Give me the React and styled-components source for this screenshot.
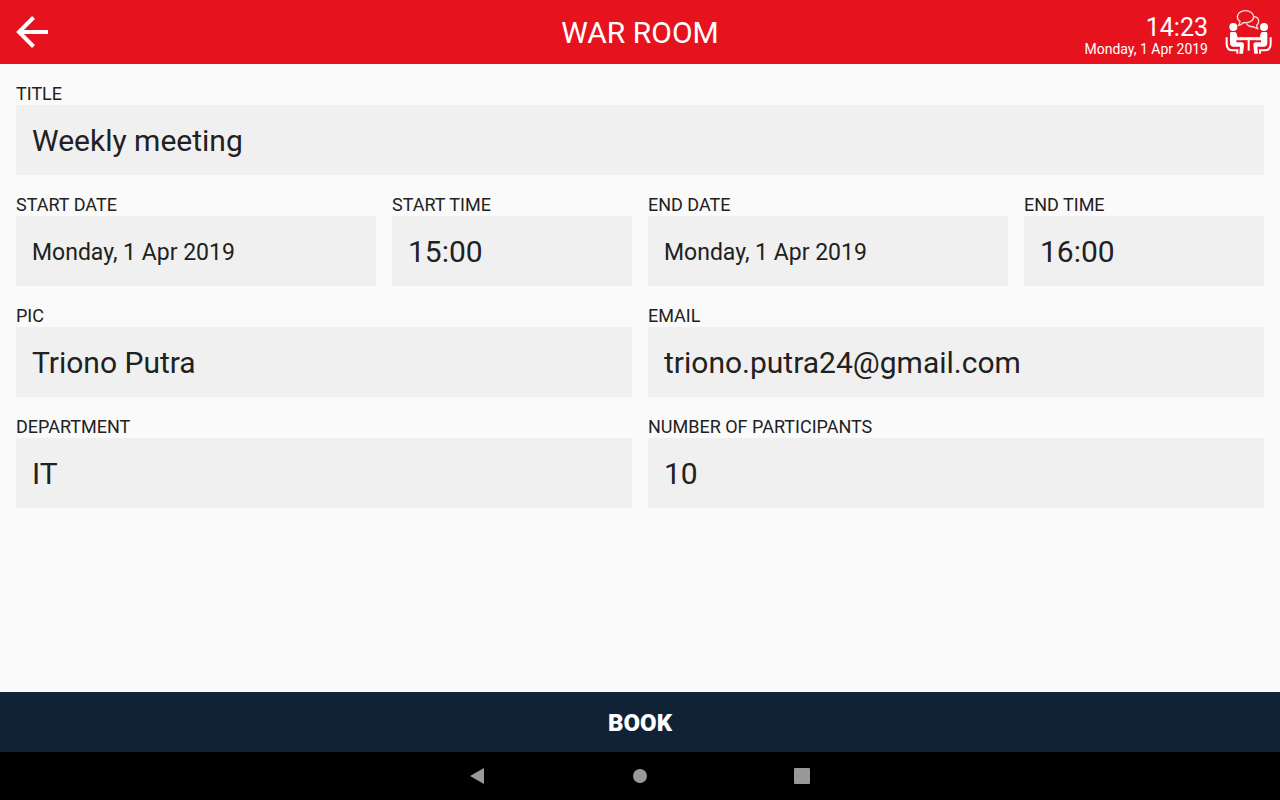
import React from 'react';
import styled, { createGlobalStyle } from 'styled-components';

const GlobalStyle = createGlobalStyle`
  * { box-sizing: border-box; }
  body {
    margin: 0;
    background: #fafafa;
    color: #212121;
    font-family: Roboto, "Liberation Sans", sans-serif;
  }
  button, input { font: inherit; color: inherit; border: 0; border-radius: 0; margin: 0; padding: 0; }
  button { background: none; cursor: pointer; }
`;

const Screen = styled.div`
  display: flex;
  flex-direction: column;
  min-height: 100vh;
`;

const Header = styled.header`
  display: grid;
  grid-template-columns: 1fr auto 1fr;
  align-items: center;
  height: 64px;
  background: #e6131e;
  color: #fff;
`;

const BackButton = styled.button`
  display: flex;
  width: 64px;
  height: 64px;
`;

const Title = styled.h1`
  margin: 0;
  font-size: 30px;
  line-height: 36px;
  padding-top: 2px;
  font-weight: 400;
`;

const Status = styled.div`
  display: flex;
  justify-content: flex-end;
  align-items: center;
  gap: 8px;
`;

const Clock = styled.div`
  display: flex;
  flex-direction: column;
  text-align: right;
  padding-top: 6px;
`;

const Time = styled.time`
  font-size: 25px;
  line-height: 28px;
`;

const Today = styled.time`
  font-size: 14px;
  line-height: 14px;
`;

const Form = styled.form`
  flex: 1;
  display: flex;
  flex-direction: column;
`;

const Fields = styled.div`
  flex: 1;
  display: grid;
  grid-template-columns: 3fr 2fr 3fr 2fr;
  align-content: start;
  gap: 20px 16px;
  padding: 20px 16px;
`;

const Field = styled.div`
  grid-column: span ${(p) => p.$span};
  display: flex;
  flex-direction: column;
  min-width: 0;
`;

const Label = styled.label`
  font-size: 18px;
  line-height: 19px;
  padding-bottom: 2px;
`;

const Input = styled.input`
  width: 100%;
  height: 70px;
  && { padding: ${(p) => (p.$compact ? 2 : 0)}px 16px 0; }
  background: #f0f0f0;
  font-size: ${(p) => (p.$compact ? 23 : 30)}px;
  outline: none;
`;

const BookButton = styled.button`
  height: 60px;
  && {
    padding-top: 2px;
    background: #102336;
    color: #fff;
    font-size: 24px;
    font-weight: 900;
  }
`;

const NavBar = styled.nav`
  display: flex;
  justify-content: center;
  gap: 114px;
  height: 48px;
  background: #000;
`;

const NavButton = styled.button`
  display: flex;
  width: 48px;
  height: 48px;
`;

const fields = [
  { id: 'title', label: 'TITLE', value: 'Weekly meeting', span: 4 },
  { id: 'start-date', label: 'START DATE', value: 'Monday, 1 Apr 2019', span: 1, compact: true },
  { id: 'start-time', label: 'START TIME', value: '15:00', span: 1 },
  { id: 'end-date', label: 'END DATE', value: 'Monday, 1 Apr 2019', span: 1, compact: true },
  { id: 'end-time', label: 'END TIME', value: '16:00', span: 1 },
  { id: 'pic', label: 'PIC', value: 'Triono Putra', span: 2 },
  { id: 'email', label: 'EMAIL', value: 'triono.putra24@gmail.com', span: 2 },
  { id: 'department', label: 'DEPARTMENT', value: 'IT', span: 2 },
  { id: 'participants', label: 'NUMBER OF PARTICIPANTS', value: '10', span: 2 },
];

const BackIcon = () => (
  <svg width="64" height="64" viewBox="0 0 64 64" fill="none" stroke="#fff" strokeWidth="4" aria-hidden="true">
    <path d="M48 32H19M33.5 17.5L19 32l14.5 14.5" />
  </svg>
);

const SeatedPerson = () => (
  <>
    <circle cx="52" cy="81" r="12" fill="#fff" stroke="none" />
    <path
      d="M47 96h8c4 0 6 2 7 6l3 10h10c5 0 5 9 0 9H61v6h15c6 0 8 3 8 8l-3 26h-11l2-21H53c-7 0-11-4-11-11v-27c0-4 1-6 5-6Z"
      fill="#fff"
      stroke="none"
    />
    <path d="M32 112v19q0 20 19 20h13v10" strokeWidth="6" />
  </>
);

const MeetingIcon = () => (
  <svg width="64" height="64" viewBox="0 0 192 192" fill="none" stroke="#fff" aria-hidden="true">
    <g strokeWidth="4" strokeOpacity="0.85">
      <path d="M88 32c-14 0-24 8-24 18 0 6 3 11 8 14 0 6-2 9-4 12 6-1 11-4 14-8 18 2 31-6 31-18 0-10-11-18-25-18Z" />
      <path d="M114 50c8 1 14 7 14 14 0 5-2 9-6 12 0 4 1 7 3 10-5-1-9-3-12-6-9 1-17-2-21-9" />
    </g>
    <SeatedPerson />
    <g transform="translate(196 0) scale(-1 1)"><SeatedPerson /></g>
    <path d="M72 116h52" strokeWidth="9" />
    <path d="M98 117v35" strokeWidth="6" />
  </svg>
);

const navItems = [
  { name: 'Back', shape: <path d="M16 24L30 16v16z" /> },
  { name: 'Home', shape: <circle cx="24" cy="24" r="7" /> },
  { name: 'Recent apps', shape: <rect x="16" y="16" width="16" height="16" rx="1" /> },
];

export default function App() {
  return (
    <Screen>
      <GlobalStyle />
      <Header>
        <BackButton type="button" aria-label="Go back"><BackIcon /></BackButton>
        <Title>WAR ROOM</Title>
        <Status>
          <Clock>
            <Time>14:23</Time>
            <Today dateTime="2019-04-01">Monday, 1 Apr 2019</Today>
          </Clock>
          <MeetingIcon />
        </Status>
      </Header>
      <Form onSubmit={(e) => e.preventDefault()}>
        <Fields>
          {fields.map((f) => (
            <Field key={f.id} $span={f.span}>
              <Label htmlFor={f.id}>{f.label}</Label>
              <Input id={f.id} type="text" defaultValue={f.value} $compact={f.compact} />
            </Field>
          ))}
        </Fields>
        <BookButton type="submit">BOOK</BookButton>
      </Form>
      <NavBar aria-label="System">
        {navItems.map((n) => (
          <NavButton key={n.name} type="button" aria-label={n.name}>
            <svg width="48" height="48" viewBox="0 0 48 48" fill="#999" aria-hidden="true">{n.shape}</svg>
          </NavButton>
        ))}
      </NavBar>
    </Screen>
  );
}
